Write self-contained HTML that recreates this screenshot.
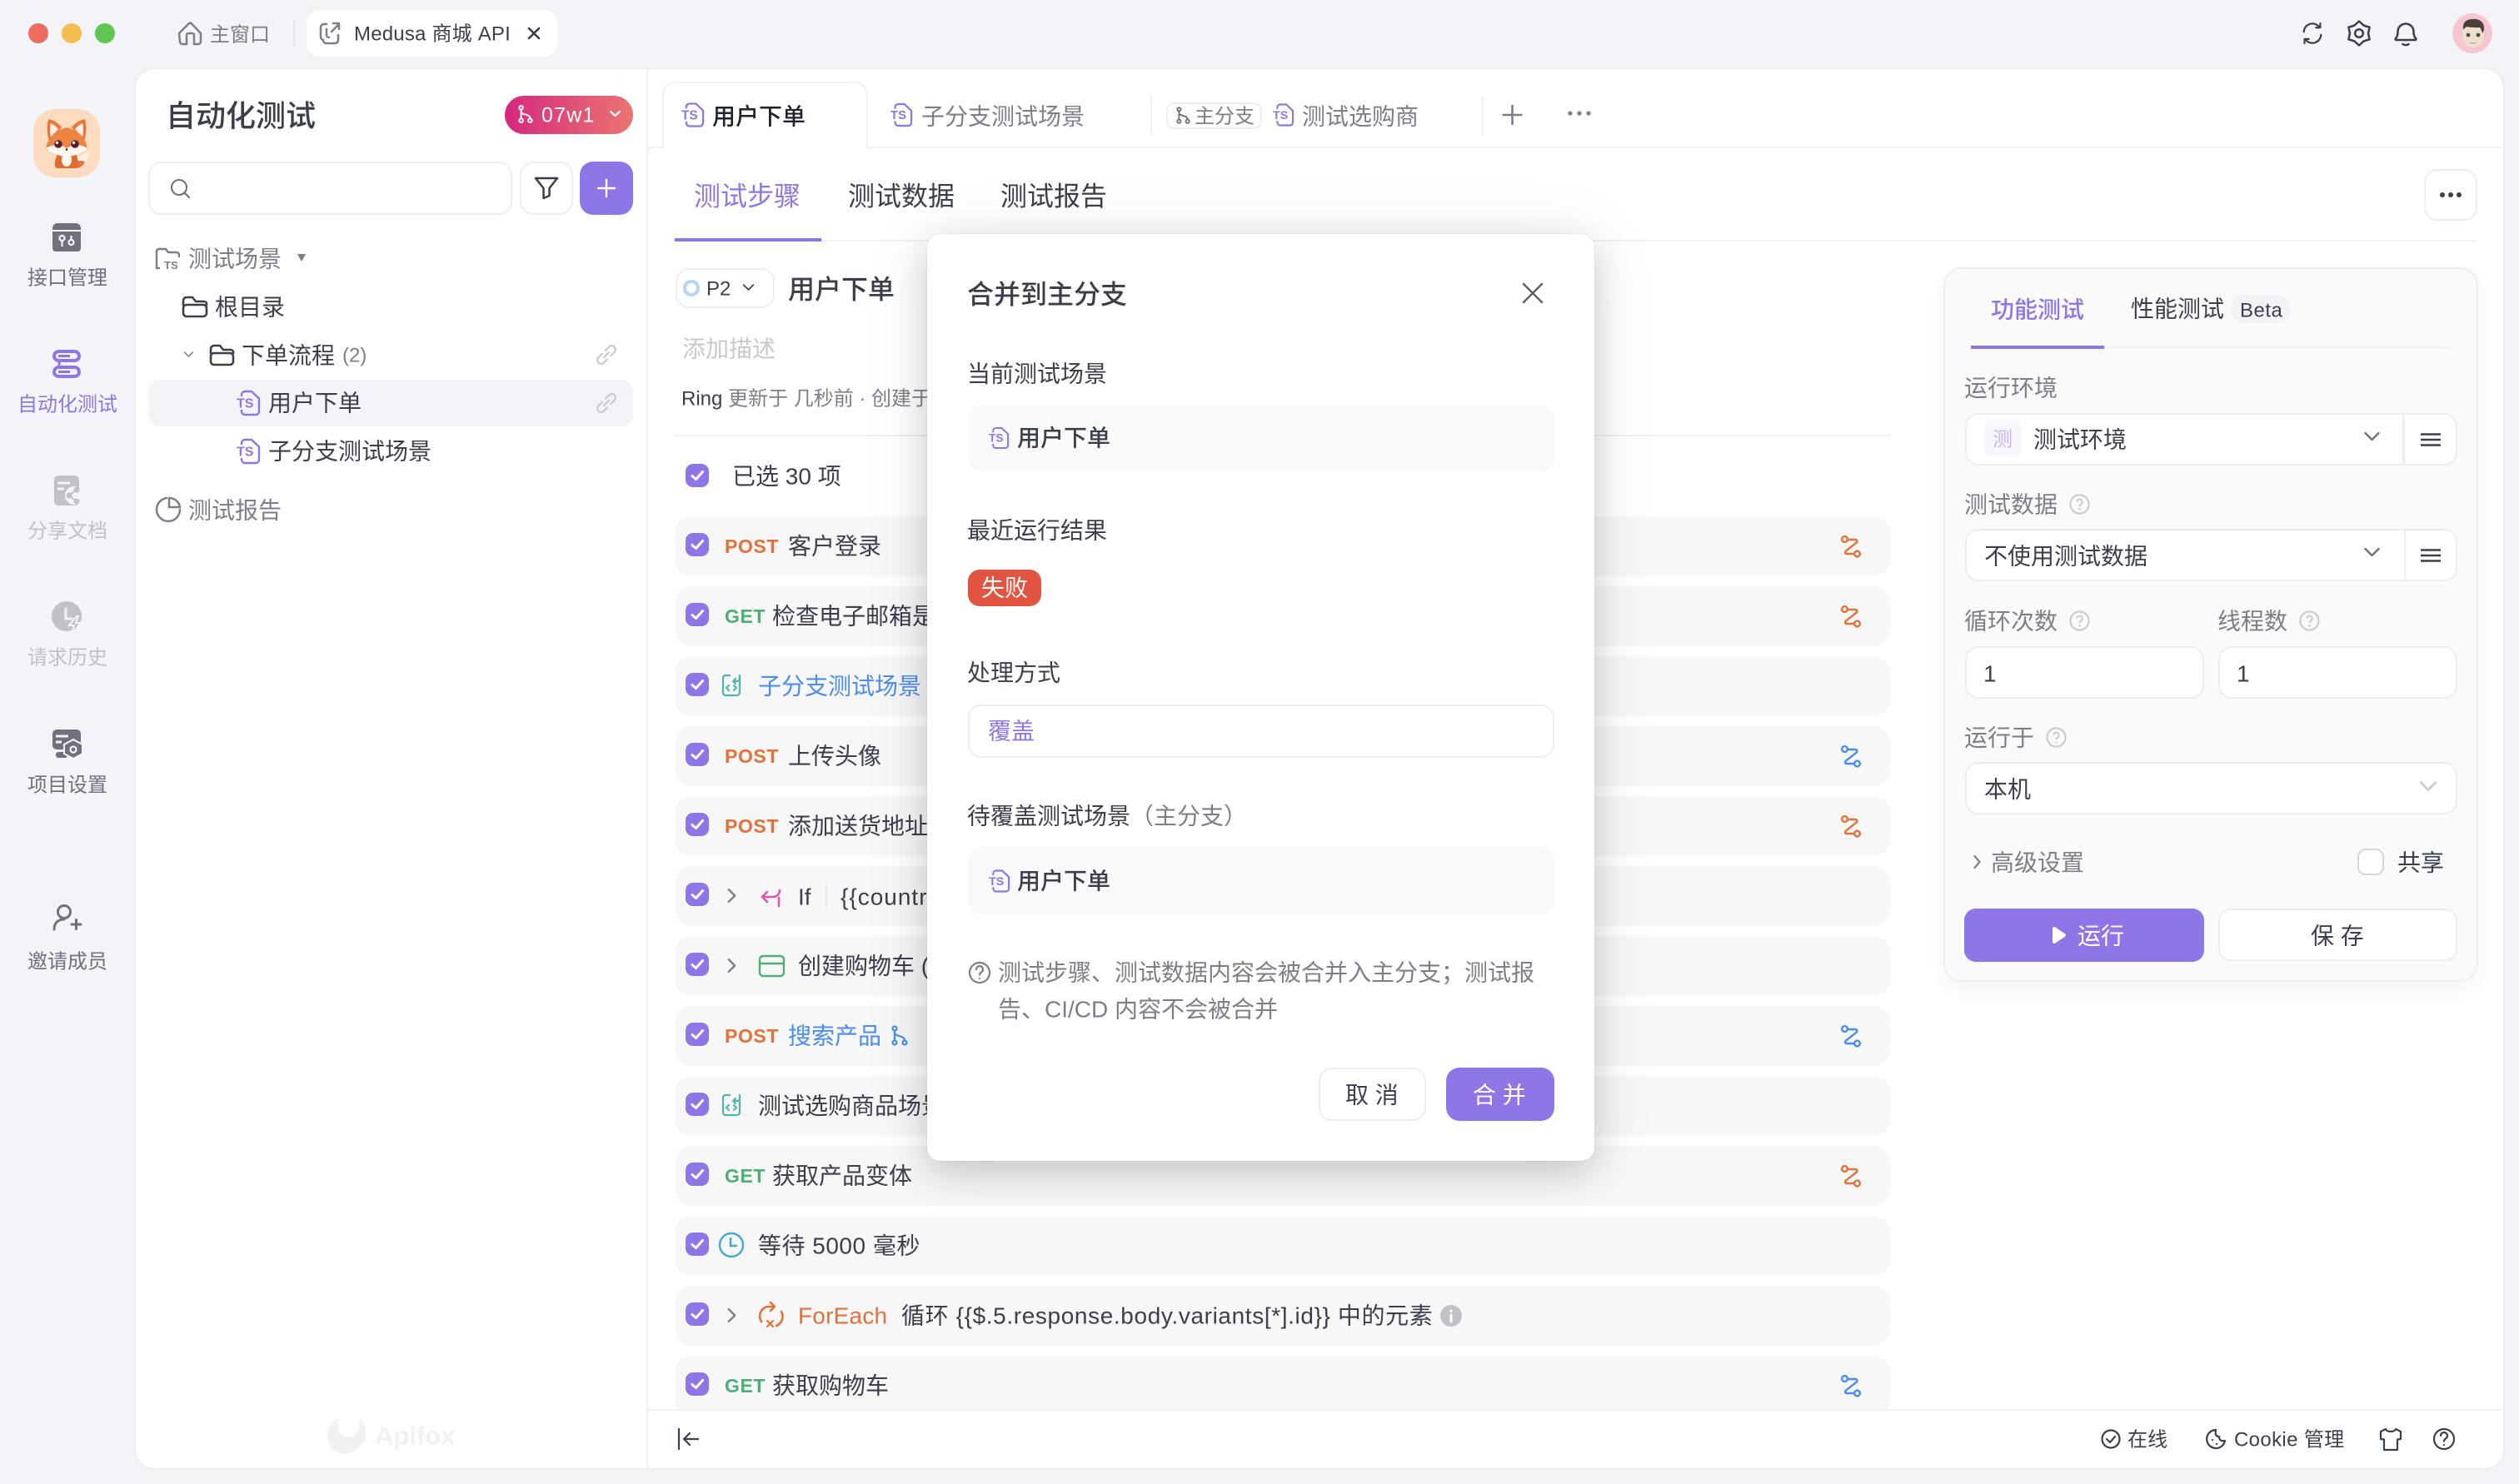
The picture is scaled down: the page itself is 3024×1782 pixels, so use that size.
<!DOCTYPE html>
<html lang="zh-CN">
<head>
<meta charset="utf-8">
<title>Medusa 商城 API</title>
<style>
html,body{margin:0;padding:0;width:3024px;height:1782px;overflow:hidden;background:#f3f4f8;font-family:"Liberation Sans","Noto Sans CJK SC",sans-serif;color:#3b3f4c}
*{box-sizing:border-box}
.a{position:absolute}
.t{position:absolute;white-space:nowrap;font-size:28px;line-height:40px;height:40px;color:#3b3f4c;transform:translateY(1.5px)}
.s{font-size:24px}
.g{color:#7c7f88}
.m{font-weight:500}
.p{color:#8f76e6}
.b{color:#4a8cf0}
.o{color:#e4703a}
.row{position:absolute;left:32px;width:1459px;height:72px;border-radius:20px;background:#f7f7f8}
.mt{position:absolute;white-space:nowrap;font-size:23px;line-height:40px;height:40px;font-weight:700;letter-spacing:.6px}
.box{position:absolute;background:#fff;border:2px solid #eceef2;border-radius:16px}
svg{overflow:visible}
svg text{font-family:"Liberation Sans",sans-serif}
</style>
</head>
<body>

<svg width="0" height="0" style="position:absolute">
<defs>
<symbol id="ts" viewBox="0 0 28 30" overflow="visible">
<path d="M6 7V5a4 4 0 0 1 4-4h8l9 8.500V25a4 4 0 0 1-4 4H10a4 4 0 0 1-4-4v-2" fill="none" stroke="#8f76e6" stroke-width="2.400" stroke-linejoin="round"/>
<text x="0" y="20.500" font-size="16" font-weight="700" fill="#8f76e6">TS</text>
</symbol>
<symbol id="ck" viewBox="0 0 28 28">
<rect width="28" height="28" rx="9" fill="#8f76e6"/>
<path d="M8 14.500l4.500 4 8-9" fill="none" stroke="#fff" stroke-width="3" stroke-linecap="round" stroke-linejoin="round"/>
</symbol>
<symbol id="rt" viewBox="0 0 28 28">
<g fill="none" stroke="currentColor" stroke-width="2.400" stroke-linecap="round" stroke-linejoin="round">
<circle cx="6.500" cy="5.500" r="3.400"/><circle cx="21.500" cy="23" r="3.400"/>
<path d="M11 6h8c2.600 0 3 2.400 1.400 3.800L8 19.600c-1.600 1.400-1 3.400 1.200 3.400H17"/>
</g>
</symbol>
<symbol id="q" viewBox="0 0 26 26">
<circle cx="13" cy="13" r="11.500" fill="none" stroke="#c8cad0" stroke-width="2.200"/>
<path d="M9.600 10.200a3.400 3.400 0 1 1 5.200 2.900c-1.200.8-1.800 1.300-1.800 2.600" fill="none" stroke="#c8cad0" stroke-width="2"/>
<circle cx="13" cy="19" r="1.300" fill="#c8cad0"/>
</symbol>
<symbol id="br" viewBox="0 0 20 24">
<g fill="none" stroke="currentColor" stroke-width="2.200">
<circle cx="4" cy="3.500" r="2.500"/><circle cx="4" cy="20.500" r="2.500"/><circle cx="16" cy="20.500" r="2.500"/>
<path d="M4 6v12M4 8c0 6 12 3 12 10"/>
</g>
</symbol>
<symbol id="ln" viewBox="-14 -14 28 28">
<g transform="rotate(45)" fill="none" stroke="#c8cad0" stroke-width="2.200">
<path d="M-4.500 -2V-9a4.500 4.500 0 0 1 9 0V-2"/><path d="M-4.500 2V9a4.500 4.500 0 0 0 9 0V2"/><path d="M0 -5V5"/>
</g>
</symbol>
<symbol id="ch" viewBox="0 0 18 10">
<path d="M1 1l8 8 8-8" fill="none" stroke="currentColor" stroke-width="2.400" stroke-linecap="round" stroke-linejoin="round"/>
</symbol>
<symbol id="rg" viewBox="0 0 12 20">
<path d="M2 2l8 8-8 8" fill="none" stroke="#7c7f88" stroke-width="2.600" stroke-linecap="round" stroke-linejoin="round"/>
</symbol>
<symbol id="hb" viewBox="0 0 24 16">
<path d="M0 1.500h24M0 8h24M0 14.500h24" stroke="#3b3f4c" stroke-width="2.600"/>
</symbol>
<symbol id="tst" viewBox="0 0 24 28">
<g fill="none" stroke="#4fb3b0" stroke-width="2.200" stroke-linecap="round" stroke-linejoin="round">
<path d="M10 2H5a3 3 0 0 0-3 3v18a3 3 0 0 0 3 3h14a3 3 0 0 0 3-3V5"/>
<path d="M22 2v4a3 3 0 0 1-3 3h-5M17 6l-3 3 3 3"/>
<path d="M9 14l-3 3 3 3M15 14l3 3-3 3"/>
</g>
</symbol>
</defs>
</svg>

<!-- Main panels -->
<div class="a" style="left:161px;top:81px;width:2846px;height:1684px;background:#fff;border:2px solid #eceef3;border-radius:24px"></div>
<div class="a" style="left:776px;top:83px;width:2px;height:1680px;background:#f0f1f4"></div>
<div class="a" style="left:778px;top:176px;width:2227px;height:2px;background:#f0f1f4"></div>
<div class="a" style="left:778px;top:1692px;width:2227px;height:2px;background:#f0f1f4"></div>

<!-- Title bar -->
<div class="a" style="left:34px;top:28px;width:24px;height:24px;border-radius:50%;background:#ee6b5f"></div>
<div class="a" style="left:74px;top:28px;width:24px;height:24px;border-radius:50%;background:#f5bd4f"></div>
<div class="a" style="left:114px;top:28px;width:24px;height:24px;border-radius:50%;background:#61c554"></div>
<div class="t s g" style="left:252px;top:21px">主窗口</div>
<div class="a" style="left:352px;top:24px;width:2px;height:32px;background:#e6e7ec"></div>
<div class="a" style="left:368px;top:12px;width:301px;height:56px;border-radius:16px;background:#fff"></div>
<div class="t s" style="left:425px;top:20px;letter-spacing:.2px">Medusa 商城 API</div>

<!-- Side nav labels -->
<div class="t s" style="left:33px;top:313px;color:#6f727c">接口管理</div>
<div class="t s p" style="left:21px;top:465px">自动化测试</div>
<div class="t s" style="left:33px;top:617px;color:#c0c2c7">分享文档</div>
<div class="t s" style="left:33px;top:769px;color:#c0c2c7">请求历史</div>
<div class="t s" style="left:33px;top:922px;color:#6f727c">项目设置</div>
<div class="t s" style="left:33px;top:1134px;color:#6f727c">邀请成员</div>

<!-- Tree panel -->
<div class="t m" style="left:199px;top:118px;font-size:36px">自动化测试</div>
<div class="a" style="left:606px;top:115px;width:154px;height:46px;border-radius:23px;background:linear-gradient(90deg,#d6287f,#ea7570)"></div>
<div class="t" style="left:650px;top:117px;font-size:25px;color:#fff;letter-spacing:1.200px">07w1</div>
<div class="box" style="left:178px;top:194px;width:437px;height:64px"></div>
<div class="box" style="left:624px;top:194px;width:64px;height:64px"></div>
<div class="a" style="left:696px;top:194px;width:64px;height:64px;border-radius:16px;background:#8f76e6"></div>
<div class="t g" style="left:226px;top:290px">测试场景</div>
<div class="t" style="left:258px;top:348px">根目录</div>
<div class="t" style="left:290px;top:406px">下单流程</div>
<div class="t s g" style="left:411px;top:406px">(2)</div>
<div class="a" style="left:178px;top:456px;width:582px;height:56px;border-radius:14px;background:#f3f4f8"></div>
<div class="t" style="left:322px;top:463px">用户下单</div>
<div class="t" style="left:322px;top:521px">子分支测试场景</div>
<div class="t g" style="left:226px;top:592px">测试报告</div>
<div class="t" style="left:450px;top:1703px;font-size:31px;font-weight:700;color:#f0f1f3">Apifox</div>

<!-- Main tabs -->
<div class="a" style="left:795px;top:98px;width:247px;height:81px;background:#fff;border:2px solid #f0f1f4;border-bottom:none;border-radius:16px 16px 0 0"></div>
<div class="t m" style="left:855px;top:119px;color:#1f2330">用户下单</div>
<div class="t g" style="left:1106px;top:119px">子分支测试场景</div>
<div class="a" style="left:1381px;top:115px;width:2px;height:48px;background:#f0f1f4"></div>
<div class="a" style="left:1400px;top:123px;width:115px;height:32px;border:2px solid #eceef2;border-radius:10px"></div>
<div class="t s g" style="left:1434px;top:119px">主分支</div>
<div class="t g" style="left:1563px;top:119px">测试选购商</div>
<div class="a" style="left:1779px;top:115px;width:2px;height:48px;background:#f0f1f4"></div>

<!-- Sub tabs -->
<div class="t p" style="left:833px;top:214px;font-size:32px">测试步骤</div>
<div class="t" style="left:1018px;top:214px;font-size:32px">测试数据</div>
<div class="t" style="left:1201px;top:214px;font-size:32px">测试报告</div>
<div class="a" style="left:810px;top:288px;width:2164px;height:2px;background:#f0f1f4"></div>
<div class="a" style="left:810px;top:286px;width:176px;height:4px;background:#8f76e6"></div>
<div class="box" style="left:2910px;top:203px;width:64px;height:62px"></div>

<!-- Scenario head -->
<div class="box" style="left:811px;top:322px;width:119px;height:48px;border-radius:16px"></div>
<div class="t s" style="left:848px;top:326px">P2</div>
<div class="t m" style="left:946px;top:326px;font-size:32px">用户下单</div>
<div class="t" style="left:819px;top:398px;color:#c8c9cd">添加描述</div>
<div class="t s" style="left:818px;top:458px">Ring <span class="g">更新于 几秒前 · 创建于 2 个月前</span></div>
<div class="a" style="left:810px;top:522px;width:1460px;height:2px;background:#f0f1f4"></div>
<div class="t" style="left:879px;top:551px">已选 30 项</div>

<!-- Steps -->
<div class="a" style="left:778px;top:600px;width:1510px;height:1092px;overflow:hidden">
  <div class="row" style="top:20px"></div>
  <div class="row" style="top:104px"></div>
  <div class="row" style="top:188px"></div>
  <div class="row" style="top:272px"></div>
  <div class="row" style="top:356px"></div>
  <div class="row" style="top:440px"></div>
  <div class="row" style="top:524px"></div>
  <div class="row" style="top:608px"></div>
  <div class="row" style="top:692px"></div>
  <div class="row" style="top:776px"></div>
  <div class="row" style="top:860px"></div>
  <div class="row" style="top:944px"></div>
  <div class="row" style="top:1028px"></div>
</div>

<div class="mt o" style="left:870px;top:636px">POST</div><div class="t" style="left:946px;top:635px">客户登录</div>
<div class="mt" style="left:870px;top:720px;color:#4caf73">GET</div><div class="t" style="left:927px;top:719px">检查电子邮箱是否已注册</div>
<div class="t b" style="left:910px;top:803px">子分支测试场景</div>
<div class="mt o" style="left:870px;top:888px">POST</div><div class="t" style="left:946px;top:887px">上传头像</div>
<div class="mt o" style="left:870px;top:972px">POST</div><div class="t" style="left:946px;top:971px">添加送货地址</div>
<div class="t" style="left:958px;top:1056px">If</div><div class="a" style="left:991px;top:1062px;width:2px;height:28px;background:#e6e7ec"></div><div class="t" style="left:1009px;top:1056px;letter-spacing:1px">{{country}}</div>
<div class="t" style="left:958px;top:1139px">创建购物车 (3)</div>
<div class="mt o" style="left:870px;top:1224px">POST</div><div class="t b" style="left:946px;top:1223px">搜索产品</div>
<div class="t" style="left:910px;top:1307px">测试选购商品场景</div>
<div class="mt" style="left:870px;top:1392px;color:#4caf73">GET</div><div class="t" style="left:927px;top:1391px">获取产品变体</div>
<div class="t" style="left:910px;top:1475px;letter-spacing:.5px">等待 5000 毫秒</div>
<div class="t o" style="left:958px;top:1559px;letter-spacing:.2px">ForEach</div><div class="t" style="left:1082px;top:1559px;letter-spacing:.62px">循环 {{$.5.response.body.variants[*].id}} 中的元素</div>
<div class="a" style="left:778px;top:1620px;width:1400px;height:72px;overflow:hidden"><div class="mt" style="left:92px;top:24px;color:#4caf73">GET</div><div class="t" style="left:149px;top:23px">获取购物车</div></div>

<!-- Right card -->
<div class="a" style="left:2333px;top:321px;width:642px;height:858px;background:#f9fafc;border:2px solid #eceef2;border-radius:22px;box-shadow:0 10px 24px rgba(30,35,60,.05)"></div>
<div class="t m p" style="left:2390px;top:351px">功能测试</div>
<div class="t" style="left:2558px;top:350px">性能测试</div>
<div class="a" style="left:2679px;top:355px;width:70px;height:32px;border-radius:15px;background:#f2f3f6;border:1px solid #eceef2"></div>
<div class="t s" style="left:2689px;top:352px;letter-spacing:.5px">Beta</div>
<div class="a" style="left:2366px;top:416px;width:576px;height:2px;background:#f2f3f6"></div>
<div class="a" style="left:2366px;top:415px;width:160px;height:4px;background:#8f76e6"></div>
<div class="t g" style="left:2358px;top:445px">运行环境</div>
<div class="box" style="left:2359px;top:496px;width:591px;height:63px"></div>
<div class="a" style="left:2884px;top:497px;width:3px;height:61px;background:#eceef2"></div>
<div class="a" style="left:2382px;top:505px;width:44px;height:44px;border-radius:8px;background:#f8f7ff"></div>
<div class="t s" style="left:2392px;top:507px;color:#c4b7f7">测</div>
<div class="t" style="left:2441px;top:507px">测试环境</div>
<div class="t g" style="left:2358px;top:585px">测试数据</div>
<div class="box" style="left:2359px;top:635px;width:591px;height:63px"></div>
<div class="a" style="left:2886px;top:636px;width:2px;height:61px;background:#eceef2"></div>
<div class="t" style="left:2382px;top:647px">不使用测试数据</div>
<div class="t g" style="left:2358px;top:725px">循环次数</div>
<div class="t g" style="left:2662px;top:725px">线程数</div>
<div class="box" style="left:2359px;top:776px;width:287px;height:63px"></div>
<div class="box" style="left:2663px;top:776px;width:287px;height:63px"></div>
<div class="t" style="left:2381px;top:788px">1</div>
<div class="t" style="left:2685px;top:788px">1</div>
<div class="t g" style="left:2358px;top:865px">运行于</div>
<div class="box" style="left:2359px;top:915px;width:591px;height:63px"></div>
<div class="t" style="left:2382px;top:927px">本机</div>
<div class="t g" style="left:2390px;top:1015px">高级设置</div>
<div class="a" style="left:2830px;top:1019px;width:32px;height:32px;border-radius:10px;background:#fff;border:2px solid #d5d7dc"></div>
<div class="t" style="left:2878px;top:1015px">共享</div>
<div class="a" style="left:2358px;top:1091px;width:288px;height:64px;border-radius:14px;background:#8f76e6"></div>
<div class="t" style="left:2494px;top:1103px;color:#fff">运行</div>
<div class="box" style="left:2663px;top:1091px;width:287px;height:63px;border-radius:14px"></div>
<div class="t" style="left:2774px;top:1103px">保 存</div>

<!-- Bottom bar -->
<div class="t s" style="left:2554px;top:1708px">在线</div>
<div class="t s" style="left:2682px;top:1708px;letter-spacing:.35px">Cookie 管理</div>

<!-- Icon layer -->
<svg class="a" style="left:0;top:0" width="3024" height="1782" viewBox="0 0 3024 1782">
<!-- home -->
<g fill="none" stroke="#7c7f88" stroke-width="2.500" stroke-linejoin="round" stroke-linecap="round">
<path d="M215 40l12-12a2 2 0 0 1 2.600 0L241 40v10a3 3 0 0 1-3 3h-5V42a2 2 0 0 0-2-2h-5a2 2 0 0 0-2 2v11h-5a3 3 0 0 1-3-3z"/>
<!-- tab icon -->
<path d="M392 29h-3a4 4 0 0 0-4 4v11a4 4 0 0 0 3 4"/>
<path d="M392 35v7a3 3 0 0 0 3 3"/>
<path d="M406 42v6a4 4 0 0 1-4 4H392a4 4 0 0 1-4-3"/>
<path d="M398 38l9-9M400 28h7v7"/>
</g>
<path d="M635 34l12 12M647 34l-12 12" stroke="#3b3f4c" stroke-width="2.600" stroke-linecap="round"/>

<!-- top right -->
<g fill="none" stroke="#3b3f4c" stroke-width="2.500" stroke-linecap="round" stroke-linejoin="round">
<g transform="translate(2776 40) scale(.86) translate(-2776 -40)">
<path d="M2764 38a12 12 0 0 1 21-7.500M2788 42a12 12 0 0 1-21 7.500"/>
<path d="M2787 26v6h-6M2765 54v-6h6"/>
</g>
<path d="M2832 25.500L2837.500 30.500L2844.600 32.750L2843 40L2844.600 47.250L2837.500 49.500L2832 54.500L2826.500 49.500L2819.400 47.250L2821 40L2819.400 32.750L2826.500 30.500Z"/>
<circle cx="2832" cy="40" r="4.800"/>
<path d="M2876 46c2-2 2.500-4 2.500-8a9.500 9.500 0 0 1 19 0c0 4 .5 6 2.500 8 .8.800.3 2-1 2h-22c-1.300 0-1.800-1.200-1-2zM2884.500 53c2 1.500 5 1.500 7 0"/>
</g>
<circle cx="2968" cy="40" r="24" fill="#f5c6d0"/>
<path d="M2956 38c-1 11 6 19 14 19s12-8 12-19c-2-6-6-9-13-9s-11 3-13 9z" fill="#eee0ca"/>
<path d="M2957 35c-1-8 4-12 11-12 8-1 15 3 14 13l-2 4c-1-4-2-6-3-7-6 0-12 0-16-1-1 1-2 2-4 3z" fill="#4b413c"/>
<circle cx="2963" cy="42" r="2.400" fill="#4b5050"/><circle cx="2975" cy="42" r="2.400" fill="#4b5050"/>
<path d="M2965 51q4 2 8 0" stroke="#b99" stroke-width="1.200" fill="none"/>

<!-- fox logo -->
<g transform="translate(30,120)">
<rect x="10" y="11" width="80" height="82" rx="27" fill="#fbdcc0"/>
<path d="M28 23Q38 25 44 33L29 50Q25 34 28 23z" fill="#e8763a"/>
<path d="M72 23Q62 25 56 33L71 50Q75 34 72 23z" fill="#e8763a"/>
<path d="M31 28Q37 31 40 35L31 45Q29 36 31 28z" fill="#fdeee5"/>
<path d="M69 28Q63 31 60 35L69 45Q71 36 69 28z" fill="#fdeee5"/>
<path d="M60 82Q74 82 77 63Q66 64 62 72z" fill="#fbf3ea"/>
<path d="M60 82Q69 82 72 74Q66 72 62 74z" fill="#e8763a"/>
<path d="M39 64Q33 80 38 82H62Q67 80 61 64Z" fill="#e06c33"/>
<ellipse cx="50" cy="72" rx="6" ry="8" fill="#fff7f0"/>
<path d="M25 58Q29 38 50 33Q71 38 75 58Q62 67 50 67Q38 67 25 58z" fill="#ee8442"/>
<path d="M25 58Q38 50 50 58Q62 50 75 58Q62 68 50 68Q38 68 25 58z" fill="#fff7f0"/>
<circle cx="40" cy="53" r="4.800" fill="#5a2228"/><circle cx="60" cy="53" r="4.800" fill="#5a2228"/>
<circle cx="38.500" cy="51.300" r="1.700" fill="#fff"/><circle cx="58.500" cy="51.300" r="1.700" fill="#fff"/>
<circle cx="50" cy="59.500" r="1.300" fill="#4a1b22"/>
</g>

<!-- side icons -->
<g transform="translate(63,268)">
<path d="M0 6a6 6 0 0 1 6-6h22a6 6 0 0 1 6 6v2H0z" fill="#6f727c"/>
<path d="M0 10h34v20a4 4 0 0 1-4 4H4a4 4 0 0 1-4-4z" fill="#6f727c"/>
<g fill="none" stroke="#f3f4f8" stroke-width="2.200"><circle cx="11.500" cy="18" r="3"/><path d="M11.500 21v7"/><circle cx="22.500" cy="23" r="3"/><path d="M22.500 20v-5"/></g>
</g>
<g transform="translate(63,420)" fill="none" stroke="#8f76e6" stroke-width="4">
<rect x="2" y="2" width="30" height="11" rx="5.500"/><rect x="2" y="21" width="30" height="11" rx="5.500"/>
<path d="M8 13v8" stroke-width="3"/>
<path d="M7 7.500h14M7 26.500h14" stroke-width="3"/>
</g>
<g transform="translate(65,571)">
<rect width="30" height="36" rx="5" fill="#c0c2c7"/>
<path d="M4 9h15M4 16h8" stroke="#f3f4f8" stroke-width="3"/>
<circle cx="24" cy="24" r="11" fill="#f3f4f8"/>
<circle cx="27" cy="17" r="3.500" fill="#c0c2c7"/><circle cx="18" cy="24" r="3.500" fill="#c0c2c7"/><circle cx="27" cy="31" r="3.500" fill="#c0c2c7"/>
<path d="M27 17l-9 7 9 7" fill="none" stroke="#c0c2c7" stroke-width="2"/>
</g>
<g transform="translate(62,722)">
<circle cx="18" cy="18" r="18" fill="#c0c2c7"/>
<path d="M17 9v12h7" fill="none" stroke="#f3f4f8" stroke-width="3" stroke-linecap="round"/>
<path d="M30 18l-9 11h6l-3 10 11-13h-6l3-8z" fill="#c0c2c7" stroke="#f3f4f8" stroke-width="2"/>
</g>
<g transform="translate(63,876)">
<rect width="34" height="24" rx="5" fill="#6f727c"/>
<rect x="4" y="27" width="14" height="7" rx="3" fill="#6f727c"/>
<path d="M4 8h15M4 15h7" stroke="#f3f4f8" stroke-width="3"/>
<path d="M25 12l11 6v11l-11 6-11-6V18z" fill="#6f727c" stroke="#f3f4f8" stroke-width="2"/>
<circle cx="25" cy="24" r="3.500" fill="none" stroke="#f3f4f8" stroke-width="2.200"/>
</g>
<g fill="none" stroke="#6f727c" stroke-width="3" stroke-linecap="round">
<circle cx="77" cy="1095" r="7.500"/><path d="M65 1116c0-8 5-12 12-12M86 1110h11M91.500 1104.500v11"/>
</g>

<!-- tree icons -->
<g fill="none" stroke="#fff" stroke-width="2.400" stroke-linecap="round" stroke-linejoin="round">
<path d="M728 216v20M718 226h20"/>
</g>
<use href="#br" x="622" y="126" width="18" height="22" color="#fff"/>
<path d="M733 134l5.500 5 5.500-5" fill="none" stroke="#fff" stroke-width="2.200" stroke-linecap="round" stroke-linejoin="round"/>
<g fill="none" stroke="#6f727c" stroke-width="2.100" stroke-linecap="round">
<circle cx="215" cy="225" r="9"/><path d="M222 232l5 5"/>
</g>
<path d="M643 214h26l-9.500 12v9l-7 3v-12z" fill="none" stroke="#3b3f4c" stroke-width="2.500" stroke-linejoin="round"/>
<g fill="none" stroke="#7c7f88" stroke-width="2.400" stroke-linecap="round" stroke-linejoin="round">
<path d="M188 322v-20a3 3 0 0 1 3-3h8l3 4h10a3 3 0 0 1 3 3v2"/>
<path d="M188 322h3"/>
</g>
<text x="197" y="323" font-size="13" font-weight="700" fill="#7c7f88">TS</text>
<path d="M357 305h10l-5 9z" fill="#7c7f88"/>
<g fill="none" stroke="#3b3f4c" stroke-width="2.600" stroke-linejoin="round">
<path d="M220 367v-6a4 4 0 0 1 4-4h7l4 5h10a3 3 0 0 1 3 3v2"/><rect x="220" y="366" width="28" height="14" rx="4"/>
<path d="M253 425v-6a4 4 0 0 1 4-4h7l4 5h9a3 3 0 0 1 3 3v2"/><rect x="253" y="424" width="27" height="14" rx="4"/>
</g>
<use href="#ch" x="221" y="422" width="11" height="7" color="#7c7f88"/>
<use href="#ln" x="714" y="412" width="28" height="28"/>
<use href="#ln" x="714" y="470" width="28" height="28"/>
<use href="#ts" x="284" y="469" width="28" height="30"/>
<use href="#ts" x="284" y="527" width="28" height="30"/>
<g fill="none" stroke="#7c7f88" stroke-width="2.500" stroke-linecap="round">
<path d="M200 598a14 14 0 1 0 16 14"/>
<path d="M203 598a13 13 0 0 1 13 11h-13z" stroke-linejoin="round"/>
</g>
<!-- Apifox mark -->
<path d="M407 1703c-6 3-14 10-14 20 0 10 7 20 15 22h12c9-3 19-11 19-24 0-8-3-15-9-18 3 6 2 13-3 17l-2 4c-5 3-12 2-15-1-4-5-5-14-3-20z" fill="#f0f1f3"/>

<!-- main tab icons -->
<use href="#ts" x="818" y="123" width="27" height="30"/>
<use href="#ts" x="1069" y="123" width="26" height="30"/>
<use href="#br" x="1412" y="127" width="17" height="23" color="#6f727c"/>
<use href="#ts" x="1528" y="123" width="25" height="30"/>
<path d="M1815.500 126v24M1803.500 138h24" stroke="#7c7f88" stroke-width="2.600"/>
<circle cx="1885" cy="136" r="2.600" fill="#7c7f88"/><circle cx="1896" cy="136" r="2.600" fill="#7c7f88"/><circle cx="1907" cy="136" r="2.600" fill="#7c7f88"/>
<circle cx="2932" cy="234" r="3" fill="#3b3f4c"/><circle cx="2942" cy="234" r="3" fill="#3b3f4c"/><circle cx="2952" cy="234" r="3" fill="#3b3f4c"/>

<!-- P2 -->
<circle cx="830" cy="346" r="8" fill="#fff" stroke="#b5d4f8" stroke-width="4"/>
<use href="#ch" x="892" y="341" width="13" height="8" color="#3b3f4c"/>

<!-- checkboxes -->
<use href="#ck" x="823" y="557" width="28" height="28"/>
<use href="#ck" x="823" y="640" width="28" height="28"/><use href="#ck" x="823" y="724" width="28" height="28"/><use href="#ck" x="823" y="808" width="28" height="28"/>
<use href="#ck" x="823" y="892" width="28" height="28"/><use href="#ck" x="823" y="976" width="28" height="28"/><use href="#ck" x="823" y="1060" width="28" height="28"/>
<use href="#ck" x="823" y="1144" width="28" height="28"/><use href="#ck" x="823" y="1228" width="28" height="28"/><use href="#ck" x="823" y="1312" width="28" height="28"/>
<use href="#ck" x="823" y="1396" width="28" height="28"/><use href="#ck" x="823" y="1480" width="28" height="28"/><use href="#ck" x="823" y="1564" width="28" height="28"/>
<use href="#ck" x="823" y="1648" width="28" height="28"/>

<!-- route icons -->
<use href="#rt" x="2208" y="642" width="28" height="28" color="#e4703a"/>
<use href="#rt" x="2208" y="726" width="28" height="28" color="#e4703a"/>
<use href="#rt" x="2208" y="894" width="28" height="28" color="#4a8cf0"/>
<use href="#rt" x="2208" y="978" width="28" height="28" color="#e4703a"/>
<use href="#rt" x="2208" y="1230" width="28" height="28" color="#4a8cf0"/>
<use href="#rt" x="2208" y="1398" width="28" height="28" color="#e4703a"/>
<use href="#rt" x="2208" y="1650" width="28" height="28" color="#4a8cf0"/>

<!-- row icons -->
<use href="#tst" x="866" y="808" width="24" height="30"/>
<use href="#tst" x="866" y="1312" width="24" height="30"/>
<use href="#rg" x="873" y="1066" width="11" height="19"/>
<use href="#rg" x="873" y="1150" width="11" height="19"/>
<use href="#rg" x="873" y="1570" width="11" height="19"/>
<g fill="none" stroke="#e055b5" stroke-width="2.600" stroke-linecap="round" stroke-linejoin="round">
<path d="M916 1077h12c4 0 8-3 8-8M921 1071l-6 6 6 6M935 1078v10"/>
</g>
<g fill="none" stroke="#4caf73" stroke-width="2.400">
<rect x="912" y="1148" width="29" height="24" rx="4"/><path d="M912 1157h29"/>
</g>
<use href="#br" x="1070" y="1231" width="20" height="25" color="#4a8cf0"/>
<g fill="none" stroke="#45a9d6" stroke-width="2.400" stroke-linecap="round">
<circle cx="878" cy="1495" r="14"/><path d="M877 1487v9h7"/>
</g>
<g fill="none" stroke="#e4703a" stroke-width="2.600" stroke-linecap="round" stroke-linejoin="round" transform="translate(0,2)">
<path d="M914 1585a12 12 0 0 1 7-18h8M925 1562l5 5-5 5M938 1573a12 12 0 0 1-6 17"/>
<path d="M921 1584l7 7M928 1584l-7 7" stroke-width="2.200"/>
</g>
<circle cx="1742" cy="1580" r="13" fill="#c0c2c7"/>
<path d="M1742 1574v.5M1742 1579v8" stroke="#fff" stroke-width="3" stroke-linecap="round"/>

<!-- right card icons -->
<use href="#ch" x="2838" y="519" width="19" height="10" color="#6f727c"/>
<use href="#hb" x="2906" y="520" width="24" height="16"/>
<use href="#ch" x="2838" y="658" width="19" height="10" color="#6f727c"/>
<use href="#hb" x="2906" y="659" width="24" height="16"/>
<use href="#q" x="2484" y="593" width="25" height="25"/>
<use href="#q" x="2484" y="733" width="25" height="25"/>
<use href="#q" x="2760" y="733" width="25" height="25"/>
<use href="#q" x="2456" y="873" width="25" height="25"/>
<use href="#ch" x="2905" y="938" width="20" height="12" color="#c8cad0"/>
<path d="M2370.500 1028l6 7-6 7" fill="none" stroke="#7c7f88" stroke-width="2.200" stroke-linecap="round" stroke-linejoin="round"/>
<path d="M2464 1115a2 2 0 0 1 3-1.700l12 8a2 2 0 0 1 0 3.400l-12 8a2 2 0 0 1-3-1.700z" fill="#fff"/>

<!-- bottom icons -->
<g fill="none" stroke="#3b3f4c" stroke-width="2.200" stroke-linecap="round" stroke-linejoin="round">
<path d="M815 1716v24M821 1728h17M821 1728l7-7M821 1728l7 7"/>
<circle cx="2534" cy="1728" r="10.500"/><path d="M2529 1728l4 4 6-7"/>
<path d="M2660 1717a11 11 0 1 0 11 13c-5 1-7-1-7-5-4 0-5-3-4-8z"/><path d="M2656 1729h.1M2661 1734h.1"/>
<path d="M2864 1716l-6 3v9l4 .5V1741h16v-12.500l4-.5v-9l-6-3c-1 4-11 4-12 0z"/>
<circle cx="2934" cy="1728" r="12"/><path d="M2930 1724a4 4 0 1 1 6 3.500c-1.500 1-2 1.500-2 3"/><path d="M2934 1735h.1"/>
</g>
</svg>

<!-- Modal -->
<div class="a" style="left:1113px;top:281px;width:801px;height:1113px;background:#fff;border-radius:16px;box-shadow:0 0 0 1px rgba(0,0,0,.03),0 14px 44px rgba(0,0,0,.17),0 0 90px rgba(0,0,0,.07)"></div>
<div class="t m" style="left:1161px;top:332px;font-size:32px">合并到主分支</div>
<div class="t" style="left:1161px;top:428px">当前测试场景</div>
<div class="a" style="left:1163px;top:486px;width:703px;height:80px;border-radius:16px;background:#f8f9fb"></div>
<div class="t m" style="left:1221px;top:505px">用户下单</div>
<div class="t" style="left:1161px;top:616px">最近运行结果</div>
<div class="a" style="left:1162px;top:684px;width:88px;height:44px;border-radius:14px;background:#e05441"></div>
<div class="t" style="left:1178px;top:685px;color:#fff">失败</div>
<div class="t" style="left:1161px;top:787px">处理方式</div>
<div class="box" style="left:1162px;top:846px;width:704px;height:64px"></div>
<div class="t p" style="left:1186px;top:857px">覆盖</div>
<div class="t" style="left:1161px;top:959px">待覆盖测试场景<span class="g">（主分支）</span></div>
<div class="a" style="left:1162px;top:1017px;width:704px;height:81px;border-radius:16px;background:#f8f9fb"></div>
<div class="t m" style="left:1221px;top:1037px">用户下单</div>
<div class="t g" style="left:1198px;top:1147px">测试步骤、测试数据内容会被合并入主分支；测试报</div>
<div class="t g" style="left:1198px;top:1191px">告、CI/CD 内容不会被合并</div>
<div class="box" style="left:1583px;top:1282px;width:129px;height:64px"></div>
<div class="t" style="left:1615px;top:1294px">取 消</div>
<div class="a" style="left:1736px;top:1282px;width:130px;height:64px;border-radius:16px;background:#8f76e6"></div>
<div class="t" style="left:1768px;top:1294px;color:#fff">合 并</div>

<svg class="a" style="left:0;top:0" width="3024" height="1782" viewBox="0 0 3024 1782">
<path d="M1829 341l22 22M1851 341l-22 22" stroke="#5a5e68" stroke-width="2.400" stroke-linecap="round"/>
<use href="#ts" x="1187" y="512" width="24" height="28"/>
<use href="#ts" x="1187" y="1044" width="25" height="28"/>
<g fill="none" stroke="#7c7f88" stroke-width="2.200" stroke-linecap="round">
<circle cx="1176" cy="1168" r="12"/><path d="M1172 1164a4 4 0 1 1 6 3.500c-1.500 1-2 1.500-2 3"/><path d="M1176 1175h.1"/>
</g>
</svg>

</body>
</html>
